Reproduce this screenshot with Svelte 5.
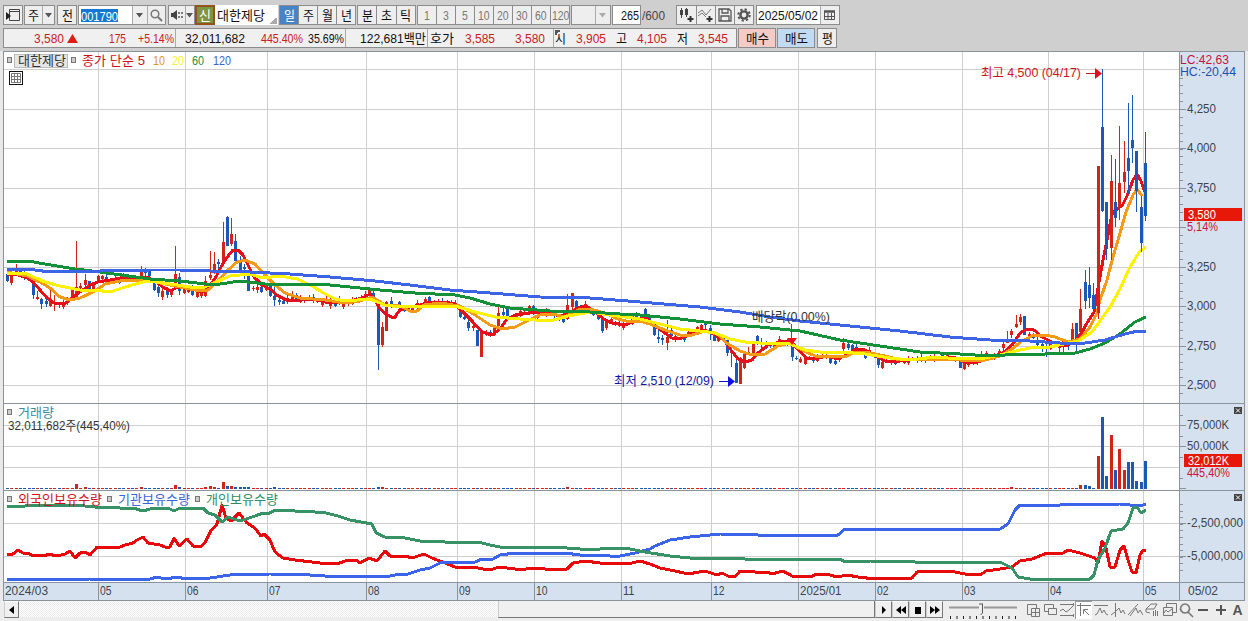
<script lang="ts">
	type Point = [number, number];
	// index, high, body top, body bottom, low, 1 = rising
	type Candle = [number, number, number, number, number, number];

	const STEP = 4.311;
	const RED = '#d42418';
	const BLUE = '#1c58b8';

	const months = [
		[98, '05'], [185, '06'], [267, '07'], [366, '08'], [457, '09'], [534, '10'], [621, '11'],
		[711, '12'], [798, '2025/01'], [875, '02'], [962, '03'], [1048, '04'], [1143, '05']
	] as [number, string][];

	const priceGrid = [
		[109, '4,250'], [148, '4,000'], [188, '3,750'], [227, ''], [267, '3,250'],
		[306, '3,000'], [346, '2,750'], [385, '2,500']
	] as [number, string][];

	const ma5: Point[] = [
		[7,274],[15,274],[27,278],[33,282],[40,290],[47,298],[54,303],[66,303],[72,298],[80,292],[90,285],[98,282],
		[110,280],[120,278],[135,277],[146,277],[155,281],[163,287],[170,291],[178,287],[187,287],[195,290],[203,292],
		[210,286],[217,275],[222,265],[228,256],[233,250],[238,250],[243,255],[248,265],[254,277],[262,285],[270,289],
		[278,296],[287,300],[300,300],[312,299],[325,302],[335,303],[350,301],[362,298],[370,294],[375,300],[380,309],
		[387,315],[394,318],[400,310],[410,307],[420,305],[430,302],[445,302],[455,304],[462,311],[472,321],[482,332],
		[492,335],[500,329],[507,319],[515,315],[530,313],[545,312],[560,316],[570,313],[577,308],[586,306],[595,312],
		[605,320],[612,323],[625,325],[635,321],[645,317],[653,324],[662,331],[672,338],[682,338],[695,332],[705,330],
		[715,335],[724,340],[731,350],[738,359],[745,362],[752,360],[758,353],[768,345],[780,342],[790,341],[797,348],
		[806,358],[815,359],[827,356],[838,359],[848,354],[856,349],[865,350],[875,356],[885,361],[900,361],[920,359],
		[935,358],[945,357],[955,358],[965,362],[975,363],[990,358],[1003,353],[1013,344],[1020,333],[1027,329],
		[1034,330],[1042,337],[1052,342],[1060,346],[1068,345],[1075,341],[1082,332],[1087,323],[1094,312],[1098,288],
		[1103,260],[1106,245],[1112,214],[1118,208],[1122,206],[1127,196],[1133,180],[1137,174],[1141,181],[1145,192]
	];
	const ma10: Point[] = [
		[7,272],[27,276],[40,282],[50,288],[60,297],[70,300],[80,298],[95,291],[105,284],[120,281],[145,280],[165,284],
		[180,287],[195,290],[208,290],[218,281],[228,270],[237,262],[245,260],[255,264],[265,275],[275,285],[285,293],
		[300,298],[325,300],[345,303],[360,301],[372,297],[385,305],[400,306],[410,311],[417,311],[424,305],[440,303],
		[460,306],[475,315],[490,325],[502,329],[515,327],[527,321],[540,315],[553,314],[565,317],[580,309],[590,309],
		[605,313],[618,319],[630,322],[640,321],[650,324],[665,330],[680,335],[692,335],[705,331],[717,334],[728,344],
		[740,351],[752,355],[765,354],[778,346],[790,343],[800,349],[815,356],[830,356],[845,357],[855,352],[870,353],
		[885,356],[900,360],[930,359],[960,360],[985,360],[1000,356],[1012,349],[1022,341],[1034,335],[1045,335],
		[1055,337],[1068,342],[1080,339],[1090,327],[1097,313],[1100,300],[1107,280],[1113,257],[1118,240],[1126,212],
		[1133,195],[1137,189],[1142,196]
	];
	const ma20: Point[] = [
		[7,273],[27,274],[45,282],[60,286],[80,290],[95,290],[110,292],[125,287],[147,281],[170,284],[190,287],[205,287],
		[218,281],[230,276],[250,274],[262,278],[280,276],[297,279],[312,286],[325,294],[335,299],[345,301],[370,299],
		[385,305],[400,307],[430,306],[455,306],[475,312],[495,317],[520,319],[550,321],[568,316],[590,312],[610,315],
		[640,319],[660,324],[680,329],[700,331],[715,333],[730,339],[745,342],[760,343],[790,344],[805,350],[820,352],
		[840,352],[865,354],[890,358],[910,360],[935,357],[960,359],[985,358],[1000,355],[1020,350],[1035,347],
		[1050,347],[1078,341],[1092,332],[1100,321],[1110,307],[1120,289],[1130,267],[1140,251],[1146,247]
	];
	const ma60: Point[] = [
		[7,261],[28,261],[45,264],[75,269],[100,272],[150,279],[180,281],[205,284],[220,284],[240,281],[265,284],
		[295,285],[320,284],[350,287],[380,290],[415,293],[455,295],[470,298],[490,304],[510,308],[550,311],[590,312],
		[620,314],[640,315],[680,319],[720,324],[760,327],[800,331],[840,340],[880,346],[920,352],[960,354],[990,356],
		[1020,354],[1045,354],[1075,353],[1090,349],[1105,343],[1120,334],[1135,322],[1146,317]
	];
	const ma120: Point[] = [
		[7,269],[35,270],[50,272],[100,271],[150,270],[180,270],[210,271],[250,272],[290,274],[330,277],[375,281],
		[410,285],[450,290],[490,293],[540,297],[590,298],[640,302],[700,307],[740,312],[770,317],[800,321],[850,326],
		[900,331],[950,337],[990,340],[1030,341],[1060,343],[1085,343],[1105,340],[1125,334],[1138,331],[1146,331]
	];

	const foreign: Point[] = [
		[7,555],[13,554],[18,550],[23,553],[28,553],[33,556],[40,555],[45,556],[48,554],[57,556],[65,554],[70,551],
		[75,558],[80,553],[85,552],[90,555],[97,547],[110,548],[120,547],[125,545],[133,543],[137,540],[143,537],
		[148,543],[160,545],[165,547],[170,547],[174,538],[179,546],[187,539],[193,546],[202,546],[206,541],[210,532],
		[217,524],[222,505],[226,518],[231,521],[239,513],[247,523],[255,528],[261,536],[264,534],[270,540],[275,552],
		[283,558],[295,560],[320,563],[337,564],[345,561],[356,560],[360,563],[369,558],[377,561],[385,551],[390,556],
		[405,556],[412,558],[424,554],[432,558],[445,563],[455,567],[465,568],[473,567],[483,569],[493,569],[499,567],
		[515,569],[520,570],[532,568],[545,569],[567,569],[573,563],[585,561],[600,563],[632,563],[640,561],[650,564],
		[660,568],[675,571],[688,574],[705,571],[717,575],[722,573],[728,576],[736,576],[740,571],[755,572],[767,572],
		[772,574],[783,571],[792,576],[810,577],[817,574],[830,575],[837,577],[847,575],[858,577],[875,579],[890,578],
		[903,579],[912,578],[917,572],[930,571],[940,571],[955,572],[965,574],[980,575],[986,571],[1000,569],[1012,567],
		[1020,561],[1032,559],[1047,553],[1063,553],[1068,550],[1080,553],[1095,558],[1098,563],[1102,541],[1106,548],
		[1110,567],[1115,567],[1120,550],[1124,546],[1128,560],[1132,572],[1136,573],[1140,555],[1143,550],[1146,550]
	];
	const institution: Point[] = [
		[7,579],[33,579],[35,580],[90,579],[110,580],[125,579],[150,579],[157,577],[165,579],[178,577],[185,579],
		[210,578],[230,575],[270,574],[310,575],[325,576],[390,576],[400,574],[408,574],[420,570],[430,568],[440,563],
		[450,562],[475,562],[482,559],[493,559],[500,555],[515,553],[565,553],[580,555],[610,556],[620,556],[635,553],
		[650,549],[655,546],[670,540],[690,537],[720,534],[758,535],[838,535],[845,529],[930,529],[1000,529],[1008,524],
		[1015,510],[1020,505],[1060,505],[1120,504],[1140,506],[1146,504]
	];
	const individual: Point[] = [
		[7,506],[20,507],[30,505],[75,505],[95,507],[120,508],[133,508],[143,511],[150,509],[165,508],[170,509],[174,511],
		[180,508],[203,508],[208,513],[215,515],[222,522],[228,517],[240,521],[255,516],[263,513],[268,514],[275,510],
		[295,511],[315,512],[322,512],[330,514],[338,516],[350,520],[372,524],[376,533],[385,537],[405,538],[420,541],
		[445,542],[478,542],[490,545],[500,547],[520,548],[545,547],[567,548],[580,549],[600,549],[620,548],[630,549],
		[645,552],[670,556],[700,559],[725,558],[745,559],[785,559],[840,559],[845,562],[870,561],[915,562],[935,563],
		[950,562],[1000,562],[1012,568],[1018,577],[1030,579],[1090,579],[1094,575],[1098,560],[1105,548],[1111,531],
		[1123,529],[1128,523],[1133,508],[1137,507],[1141,513],[1146,510]
	];

	const known: Candle[] = [
		[0,273,274,281,282,0],[1,274,275,283,285,1],[2,264,269,274,275,1],[3,269,271,272,276,0],[4,270,273,276,280,0],
		[5,275,277,279,280,0],[6,280,280,295,299,0],[7,291,297,299,300,1],[8,298,299,304,309,0],[9,299,301,304,307,0],
		[10,289,299,306,307,1],[11,295,302,303,311,1],[12,302,303,305,308,0],[13,300,302,307,309,1],[14,297,299,303,305,1],
		[15,289,290,300,300,1],[16,241,287,297,298,1],[17,283,286,288,289,1],[18,274,280,285,286,1],[19,281,281,290,293,0],
		[20,284,285,290,291,1],[21,275,276,281,283,1],[22,275,276,279,281,1],[23,274,277,281,283,0],[24,278,279,282,282,1],
		[25,276,278,281,283,1],[26,278,279,283,284,0],[27,273,274,280,282,0],[28,276,277,280,281,1],[29,276,277,280,281,0],
		[30,276,277,281,282,1],[31,266,271,282,283,1],[32,268,270,273,276,0],[33,269,271,276,281,0],[34,280,281,290,291,0],
		[35,286,287,293,297,0],[36,288,291,297,300,1],[37,287,288,295,298,0],[38,289,290,295,297,1],[39,246,274,287,288,1],
		[40,273,277,291,295,0],[41,286,287,293,294,1],[42,285,286,292,293,1],[43,285,286,295,296,0],[44,290,292,297,298,1],
		[45,290,291,296,298,1],[46,276,281,296,297,1],[47,251,275,278,280,1],[48,252,264,273,274,1],[49,259,262,264,272,0],
		[50,222,242,263,266,1],[51,216,217,246,246,0],[52,218,234,244,246,1],[53,234,241,261,261,0],[54,256,260,270,272,0],
		[55,264,267,269,279,0],[56,270,275,291,291,0],[57,286,288,289,291,1],[58,285,287,290,293,1],[59,286,287,292,293,0],
		[60,284,285,290,291,1],[61,282,283,296,297,0],[62,287,296,300,306,0],[63,297,300,302,305,0],[64,300,301,304,304,0],
		[66,291,294,301,302,1],[67,293,295,300,301,0],[75,298,300,306,309,1],[78,300,302,307,309,1],
		[83,291,294,299,300,1],[84,288,289,293,297,1],[85,291,293,297,302,0],[86,301,302,345,370,0],[87,322,327,345,347,1],
		[88,301,302,331,331,1],[89,297,301,307,308,0],[91,301,302,308,310,0],[92,306,307,311,312,0],[97,297,299,304,306,1],
		[98,296,297,303,304,0],[105,306,307,317,318,0],[106,316,317,319,320,0],[107,320,322,328,331,0],[108,323,326,328,331,1],
		[109,330,330,346,346,0],[110,333,333,357,357,1],[111,330,332,335,336,1],[112,330,332,336,337,0],[113,326,327,335,336,1],
		[114,306,313,326,327,1],[115,308,312,315,318,0],[116,308,309,316,317,0],[121,305,306,313,315,1],[122,305,306,313,315,0],
		[123,313,315,318,321,1],[128,315,316,320,321,0],[129,316,318,322,323,0],[130,294,305,319,320,1],[131,293,293,307,309,1],
		[132,300,301,308,309,0],[133,305,306,310,312,0],[136,310,311,315,316,0],[137,314,315,319,320,0],[138,317,318,331,333,0],
		[139,319,320,328,330,1],[145,315,316,324,325,1],[146,312,314,318,319,0],[148,308,309,314,316,0],[149,315,316,323,324,0],
		[150,323,324,335,336,0],[151,330,337,339,343,0],[152,335,338,340,345,0],[153,320,337,343,350,1],[154,328,330,336,337,0],
		[160,326,327,333,334,1],[161,324,325,332,333,1],[162,322,323,325,330,0],[163,325,328,334,340,0],[164,332,333,341,341,0],
		[165,333,334,341,342,1],[166,335,337,341,342,0],[167,338,340,353,356,0],[168,345,351,353,367,1],[169,360,363,383,383,0],
		[170,357,358,384,384,1],[171,353,354,368,369,1],[172,347,352,354,355,1],[173,343,344,353,354,1],[174,335,336,344,345,0],
		[175,338,342,344,350,0],[182,345,346,357,361,0],[183,356,358,359,360,0],[184,357,359,362,363,1],[185,355,357,364,365,1],
		[191,357,358,363,364,0],[192,360,361,364,365,0],[194,338,343,349,352,1],[195,341,344,348,350,0],[196,344,345,350,352,0],
		[199,352,353,358,359,0],[202,358,359,365,368,0],[203,360,362,368,369,1],[221,359,361,368,368,0],[222,361,362,369,370,1],
		[226,351,355,357,359,1],[227,351,353,359,360,1],[230,349,351,355,356,1],[231,341,344,348,351,1],[232,331,341,343,343,1],
		[233,329,331,335,338,1],[234,315,324,327,328,1],[235,314,317,322,325,1],[236,316,316,335,335,0],[237,332,334,337,339,1],
		[238,333,334,338,339,0],[239,336,342,345,347,0],[240,343,344,348,352,0],[241,344,346,348,357,0],[242,342,343,349,350,1],
		[243,341,342,346,347,0],[244,343,345,348,352,1],[245,339,341,347,352,1],[246,342,343,346,350,0],[247,323,329,342,343,1],
		[248,323,323,341,351,0],[249,289,309,332,333,1],[250,270,282,301,309,0],[251,267,285,298,308,0],[252,283,295,309,310,0],
		[253,166,166,313,319,1],[254,69,127,211,212,0],[255,202,202,249,260,0],[256,155,181,248,260,1],[257,159,202,218,227,0],
		[258,126,183,208,220,1],[259,141,172,182,193,1],[260,103,158,171,194,0],[261,95,140,148,163,0],[262,151,151,191,212,0],
		[263,196,207,243,252,0],[264,132,163,216,221,0]
	];

	const volumes: Record<number, number> = {
		16: 5, 18: 2, 31: 2, 39: 4, 40: 2, 46: 2, 47: 3, 48: 2, 50: 7, 51: 3, 52: 3, 53: 2, 54: 2, 55: 2, 56: 2,
		62: 2, 86: 2, 87: 2, 130: 2, 233: 2, 249: 4, 250: 4, 251: 3, 252: 1, 253: 33, 254: 72, 255: 13, 256: 54,
		257: 19, 258: 40, 259: 19, 260: 27, 261: 27, 262: 8, 263: 7, 264: 28
	};

	function valueAt(points: Point[], x: number) {
		const i = Math.max(1, points.findIndex((p) => p[0] >= x));
		const [x0, y0] = points[i - 1];
		const [x1, y1] = points[i];
		return y0 + ((y1 - y0) * (x - x0)) / (x1 - x0);
	}

	const xOf = (i: number) => Math.round(7 + STEP * i);

	const candles: Candle[] = Array.from({ length: 265 }, (_, i) => {
		const hit = known.find((c) => c[0] === i);
		if (hit) return hit;
		// quiet sessions hug the short average
		const wobble = ((i * 37) % 7) - 3;
		const mid = Math.round(valueAt(ma5, xOf(i)) + wobble * 0.4);
		const half = 1 + ((i * 13) % 3) * 0.5;
		return [i, mid - half - 1 - (i % 3), mid - half, mid + half, mid + half + 1 + (i % 2), (i * 29) % 5 < 3 ? 1 : 0];
	});

	const toPoints = (p: Point[]) => p.map((q) => q.join(',')).join(' ');

	const priceTicks = Array.from({ length: 41 }, (_, i) => 77.5 + i * 7.89);
	const volTicks = [415, 436, 457, 478, 488];
	const holdTicks = Array.from({ length: 11 }, (_, i) => 504 + i * 6.6);

	const periods = ['일', '주', '월', '년'];
	const intraday = ['분', '초', '틱'];
	const minutes = ['1', '3', '5', '10', '20', '30', '60', '120'];

	// text, width, gap before, tone
	const quotes = [
		['32,011,682', 60, 9, ''], ['445.40%', 42, 16, 'up'], ['35.69%', 36, 5, ''], ['|', 0, 1, ''],
		['122,681백만', 66, 14, ''], ['|', 0, 1, ''], ['호가', 24, 2, ''], ['3,585', 30, 11, 'up'],
		['3,580', 30, 20, 'up'], ['|', 0, 8, ''], ['시', 11, 1, 'corner'], ['3,905', 30, 10, 'up'],
		['고', 11, 10, ''], ['4,105', 30, 10, 'up'], ['저', 11, 10, ''], ['3,545', 30, 10, 'up']
	] as [string, number, number, string][];

	const tools = [
		'M6 12.500H2.500v-10h9V6M6.500 6.500h8v8h-8zM10.500 6.500v8M6.500 10.500h8',
		'M6 9.500H2.500v-7h9V6M6.500 6.500h8v6h-8z',
		'M1 2.500h13M1 13.500h13M14.500 1v3M14.500 12v3M1 9l3-2 3 3 3-2 4-4',
		'M1 3.500h14M4.500 1v13M13 13L8 8M7.500 12V7.500H12',
		'M1 3.500h14M2 13l2-1 3-6 2 5 2-3 2 4 2 1',
		'M5.500 1v14M1 13l4-3 4-4 2 5 2-3 2 4',
		'M1 13L11 2M3 14l6-8 2 5 2-3 3 5',
		'M2 7l5-5h6l-3 5zM2 7v3l4 1M9.500 9v5M11.500 8v6M13.500 9v5',
		'M5.500 5V1.500h10v9H12M2.500 5.500h9v8h-9zM3 11l2-3 2 2 4-3',
		'M7 2a4.5 4.5 0 1 0 .1 0M10 10l5 5'
	];
</script>

{#snippet label(text: string, w: number, tone = '')}
	<svg class="label {tone}" width={w} height="16">
		<text x="0" y="12.5" textLength={w} lengthAdjust="spacingAndGlyphs">{text}</text>
	</svg>
{/snippet}

{#snippet caret()}
	<svg width="8" height="5"><path d="M0 0h7L3.5 4.500z" fill="#555" /></svg>
{/snippet}

{#snippet line(points: Point[], color: string)}
	<polyline points={toPoints(points)} stroke={color} />
{/snippet}

{#snippet words(x: number, y: number, text: string, w: number, color: string)}
	<text {x} {y} fill={color} textLength={w} lengthAdjust="spacingAndGlyphs">{text}</text>
{/snippet}

<div class="app">
	<header class="toolbar">
		<button class="box w20">
			<svg width="16" height="16" fill="none" stroke="#444">
				<path d="M4.500 2.500h10v11h-10zM4 4.500h11" /><path d="M1 5l5 4-5 4z" fill="#222" stroke="none" />
			</svg>
		</button>
		<div class="box split l1">
			<span class="w17">{@render label('주', 11)}</span><i></i><span class="grow">{@render caret()}</span>
		</div>
		<button class="box w20 l2">{@render label('전', 11)}</button>
		<div class="box code l1">
			<span class="entry"><mark>{@render label('001790', 37)}</mark></span><i></i>
			<span class="w14">{@render caret()}</span><i></i>
			<span class="grow">
				<svg width="13" height="13" fill="none" stroke="#777" stroke-width="1.5"><circle cx="5" cy="5" r="3.800" /><path d="M8 8l4 4" stroke-width="2" /></svg>
			</span>
		</div>
		<div class="box sound l2">
			<span class="w17">
				<svg width="14" height="12"><path d="M1 4h2l4-3v10L3 8H1z" fill="#444" /><path d="M9 3v2M9 7v2M12 3v2M12 7v2" stroke="#555" stroke-width="1.5" /></svg>
			</span><i></i><span class="grow">{@render caret()}</span>
		</div>
		<div class="credit">{@render label('신', 12)}</div>
		<div class="name">{@render label('대한제당', 48)}</div>
		<div class="group l1">
			{#each periods as p, i}
				<button class:on={i === 0}>{@render label(p, 11)}</button>
			{/each}
		</div>
		<div class="group l1">
			{#each intraday as p}
				<button>{@render label(p, 11)}</button>
			{/each}
		</div>
		<div class="group dim l1">
			{#each minutes as m}
				<button>{@render label(m, m.length * 5.8)}</button>
			{/each}
		</div>
		<div class="box combo"><span></span><i></i><span class="w14">{@render caret()}</span></div>
		<div class="count l1">{@render label('265', 18)}</div>
		<div class="total">{@render label('/600', 23)}</div>
		<div class="group icons">
			<button>
				<svg width="17" height="17"><path d="M3.500 1v10M8.500 1v9" stroke="#444" /><path d="M2 3h3v5H2zM7 2h3v6H7z" fill="#444" /><path d="M12.500 9v6M9.500 12h6" stroke="#333" stroke-width="2" /></svg>
			</button>
			<button>
				<svg width="17" height="17" fill="none" stroke="#777"><path d="M1 6l4-3 4 5 5-6M1 9l4-3 4 4" /><path d="M12.500 9v6M9.500 12h6" stroke="#333" stroke-width="2" /></svg>
			</button>
			<button>
				<svg width="16" height="16" fill="none" stroke="#555" stroke-width="1.300"><path d="M2 2h10l2 2v10H2zM5 2v4h6V2M4 14V9h8v5" /></svg>
			</button>
			<button>
				<svg width="16" height="16" fill="none" stroke="#555"><circle cx="8" cy="8" r="3.600" stroke-width="2.400" /><circle cx="8" cy="8" r="5.700" stroke-width="2" stroke-dasharray="2.200 2.276" /></svg>
			</button>
		</div>
		<div class="box date l2">
			<span class="day">{@render label('2025/05/02', 60)}</span><i></i>
			<span class="grow">
				<svg width="12" height="11" fill="none" stroke="#555"><path d="M0.500 1.500h10v8h-10zM0.500 6.500h10M4 3v6M7.500 3v6" /><path d="M0 1.500h11" stroke-width="2.500" /></svg>
			</span>
		</div>
	</header>

	<div class="quote-row">
		<div class="quote">
			<div class="last">
				{@render label('3,580', 30, 'up')}
				<svg class="rise" width="11" height="9"><path d="M5.500 0L11 9H0z" fill="#dc1e14" /></svg>
				<span class="diff">{@render label('175', 17, 'up')}</span>
				{@render label('+5.14%', 36, 'up')}
			</div>
			{#each quotes as [text, w, gap, tone]}
				{#if text === '|'}
					<i style:margin-left="{gap}px"></i>
				{:else}
					<span style:margin-left="{gap}px" class:corner={tone === 'corner'}>{@render label(text, w, tone)}</span>
				{/if}
			{/each}
		</div>
		<button class="box buy">{@render label('매수', 23)}</button>
		<button class="box sell">{@render label('매도', 23)}</button>
		<button class="box w20">{@render label('평', 11)}</button>
	</div>

	<svg class="chart" width="1248" height="550" viewBox="0 51 1248 550">
		<rect x="3" y="51" width="1242" height="550" fill="#fff" />
		<rect x="1179" y="52" width="65" height="549" fill="#d6e1ef" />
		<rect x="4" y="583" width="1240" height="18" fill="#d6e1ef" />

		<g class="grid">
			{#each months as [x]}
				<path d="M{x + 0.5} 52V582" />
			{/each}
			{#each [69, ...priceGrid.map((p) => p[0]), 425, 446, 467, 523, 556] as y}
				<path d="M4 {y + 0.5}H1179" />
			{/each}
		</g>

		<g class="frame">
			<path d="M3 51.500H1245M3.500 51V601M1244.500 51V601M1179.500 51V601M3 403.500H1245M3 490.500H1245M3 582.500H1245M3 600.500H1245" />
			{#each months as [x]}
				<path d="M{x + 0.5} 583V601" />
			{/each}
			{#each priceTicks as y}
				<path d="M1180 {Math.round(y) + 0.5}h3" />
			{/each}
			{#each [...volTicks, ...holdTicks] as y}
				<path d="M1180 {Math.round(y) + 0.5}h3" />
			{/each}
			{#each [...priceGrid.map((p) => p[0]), 425, 446, 488, 523, 556] as y}
				<path d="M1180 {y + 0.5}h6" />
			{/each}
		</g>

		<g class="bars">
			{#each candles as [i, high, top, bottom, low, up]}
				<rect x={xOf(i)} y={high} width="1" height={low - high} fill={up ? RED : BLUE} />
				<rect x={xOf(i) - 1} y={top} width="3" height={bottom - top} fill={up ? RED : BLUE} />
			{/each}
		</g>

		<g class="lines">
			{@render line(ma5, '#e4101c')}
			{@render line(ma10, '#f49a14')}
			{@render line(ma20, '#fff200')}
			{@render line(ma60, '#149038')}
			{@render line(ma120, '#3c64e4')}
		</g>
		<g class="bars">
			{#each candles.slice(252) as [i, high, top, bottom, low, up]}
				<rect x={xOf(i)} y={high} width="1" height={low - high} fill={up ? RED : BLUE} />
				<rect x={xOf(i) - 1} y={top} width="3" height={bottom - top} fill={up ? RED : BLUE} />
			{/each}
			{#each candles as [i, , , , , up]}
				<rect x={xOf(i) - 1} y={489 - (volumes[i] ?? 1)} width="3" height={volumes[i] ?? 1} fill={up ? RED : BLUE} />
			{/each}
		</g>
		<path d="M787 338h10l-5 7z" fill="#e4101c" />
		<path d="M791.500 324v15" stroke="#d42418" />

		{@render words(981, 77, '최고 4,500 (04/17)', 100, '#d01020')}
		<path d="M1086 73.500h10" stroke="#d01020" />
		<path d="M1095 68l7 5.500-7 5.500z" fill="#e01020" />
		{@render words(614, 385, '최저 2,510 (12/09)', 100, '#1414a0')}
		<path d="M719 381.500h10" stroke="#1414c0" />
		<path d="M728 376l7 5.500-7 5.500z" fill="#1010e0" />
		{@render words(752, 321, '배당락(0,00%)', 78, '#333')}

		<g class="pins">
			{#each [[7, 57], [71, 57], [7, 409], [7, 496], [107, 496], [195, 496]] as [x, y]}
				<rect x={x + 0.5} y={y + 0.5} width="4" height="5" />
			{/each}
		</g>
		<rect x="14.500" y="54.500" width="53" height="13" fill="#e6e6e6" stroke="#bbb" />
		{@render words(18, 65, '대한제당', 48, '#333')}
		{@render words(82, 65, '종가 단순 5', 63, '#d01020')}
		{@render words(153, 65, '10', 12, '#e0961e')}
		{@render words(172, 65, '20', 12, '#f6f03c')}
		{@render words(192, 65, '60', 12, '#1c8c46')}
		{@render words(213, 65, '120', 18, '#3c64c8')}
		<rect x="9.500" y="71.500" width="13" height="13" fill="#fff" stroke="#111" />
		<path d="M11.500 73.500h9v9h-9zM11 76.500h10M11 79.500h10M14.500 73v10M17.500 73v10" fill="none" stroke="#777" />

		{@render words(18, 417, '거래량', 36, '#3a8c9c')}
		{@render words(8, 430, '32,011,682주(445,40%)', 122, '#333')}

		<g class="lines">
			{@render line(foreign, '#e60a0a')}
			{@render line(institution, '#3c64e8')}
			{@render line(individual, '#379266')}
		</g>
		{@render words(18, 504, '외국인보유수량', 84, '#d01020')}
		{@render words(118, 504, '기관보유수량', 72, '#3c64d8')}
		{@render words(206, 504, '개인보유수량', 72, '#2f8c62')}

		<g class="scale">
			{@render words(1180, 63.5, 'LC:42,63', 49, '#c8143c')}
			{@render words(1180, 76, 'HC:-20,44', 56, '#1c50b4')}
			{#each priceGrid as [y, text]}
				{#if text}{@render words(1187, y + 4, text, 29, '#3c4450')}{/if}
			{/each}
			<rect x="1184" y="208" width="58" height="13" fill="#e81808" />
			{@render words(1188, 218.5, '3,580', 28, '#fff')}
			{@render words(1187, 231, '5,14%', 31, '#c8143c')}
			{@render words(1187, 429, '75,000K', 42, '#3c4450')}
			{@render words(1187, 449.5, '50,000K', 42, '#3c4450')}
			<rect x="1184" y="454" width="58" height="13" fill="#e81808" />
			{@render words(1188, 464.5, '32,012K', 41, '#fff')}
			{@render words(1187, 477, '445,40%', 43, '#c8143c')}
			{@render words(1187, 527, '-2,500,000', 56, '#3c4450')}
			{@render words(1187, 560, '-5,000,000', 56, '#3c4450')}
		</g>
		{#each [407, 494] as y}
			<rect x="1234" {y} width="8" height="7" fill="#444" />
			<path d="M1236 {y + 1.5}l4 4m0-4l-4 4" stroke="#fff" />
		{/each}

		{@render words(5, 595, '2024/03', 43, '#3c4450')}
		{#each months as [x, text]}
			{@render words(x + 2, 595, text, text.length * 6 - 0.5, '#3c4450')}
		{/each}
		{@render words(1188, 595, '05/02', 30, '#3c4450')}
	</svg>

	<footer>
		<button class="key"><svg width="6" height="8"><path d="M5 0v8L0 4z" /></svg></button>
		<div class="track"></div>
		<div class="thumb"></div>
		<button class="key"><svg width="6" height="8"><path d="M1 0v8l4-4z" /></svg></button>
		<button class="key"><svg width="10" height="8"><path d="M5 0v8L0 4zM10 0v8L5 4z" /></svg></button>
		<button class="key"><svg width="8" height="8"><path d="M1 1h6v7H1z" /></svg></button>
		<button class="key"><svg width="10" height="8"><path d="M0 0v8l5-4zM5 0v8l5-4z" /></svg></button>
		<svg class="slider" width="70" height="18" stroke="#555">
			<path d="M0 5.500h68" stroke="#999" stroke-width="2" />
			<path d="M1 15.500h70" stroke="#222" stroke-width="3" stroke-dasharray="1 5.500" />
			<path d="M30 2h5v8l-2 2h-3z" fill="#eee" stroke="none" /><path d="M30 2h4M33.500 2v9l-2 2" fill="none" />
		</svg>
		{#each tools as d, i}
			<button class="tool" class:pressed={i === 3}>
				<svg width="16" height="16" fill="none" stroke="#777"><path {d} stroke-width={i === 9 ? 1.6 : 1} /></svg>
			</button>
		{/each}
		<button class="tool"><svg width="16" height="16" stroke="#555" stroke-width="2"><path d="M3 8h10" /></svg></button>
		<button class="tool"><svg width="16" height="16" stroke="#555" stroke-width="2"><path d="M3 8h10M8 3v10" /></svg></button>
		<button class="tool big">A</button>
	</footer>
</div>

<style>
	:global(body) {
		background: #cfcfcf;
		overflow: hidden;
	}

	.app {
		width: 1248px;
		height: 621px;
		font-family: 'Liberation Sans', 'Noto Sans CJK KR', sans-serif;
		font-size: 13px;
		display: flex;
		flex-direction: column;
		background: #cfcfcf;
	}

	button {
		padding: 0;
		border: 0;
		background: none;
		font: inherit;
	}

	svg {
		flex: none;
		display: block;
	}

	.label {
		overflow: visible;
		fill: #111;
	}

	.label.up {
		fill: #c8201e;
	}

	.toolbar {
		display: flex;
		height: 20px;
		padding: 5px 0 0 3px;
	}

	.box {
		display: flex;
		align-items: center;
		justify-content: center;
		box-sizing: border-box;
		height: 20px;
		flex: none;
		border: 1px solid #8c8c8c;
		background: #eee;
	}

	.box > span {
		display: flex;
		align-items: center;
		justify-content: center;
		height: 18px;
	}

	.box > i, .quote > i {
		width: 1px;
		align-self: stretch;
		background: #aaa;
	}

	.l1 { margin-left: 1px; }
	.l2 { margin-left: 2px; }
	.w20 { width: 20px; }
	.w17 { width: 17px; }
	.w14 { width: 14px; }
	.grow { flex: 1; }
	.split { width: 31px; }
	.sound { width: 27px; }

	.code {
		width: 88px;

		.entry {
			width: 53px;
			justify-content: flex-start;
			background: #fff;
		}

		mark {
			height: 13px;
			margin-left: 2px;
			background: #1478d0;
		}

		mark .label {
			fill: #fff;
			margin-top: -1px;
		}
	}

	.credit {
		display: flex;
		align-items: center;
		justify-content: center;
		box-sizing: border-box;
		width: 20px;
		height: 20px;
		border: 2px solid #94521c;
		background: #7e9440;

		.label { fill: #fff; }
	}

	.name {
		box-sizing: border-box;
		width: 63px;
		height: 20px;
		padding-left: 2px;
		display: flex;
		align-items: center;
		background: linear-gradient(135deg, transparent 50%, #aaa 50%) right 1px bottom 1px / 7px 7px no-repeat #fff;
	}

	.group {
		display: flex;
		box-sizing: border-box;
		height: 20px;
		border: 1px solid #8c8c8c;
		border-right: 0;
		background: #eee;

		button {
			display: flex;
			align-items: center;
			justify-content: center;
			box-sizing: border-box;
			width: 19.1px;
			border-right: 1px solid #8c8c8c;
		}

		.on { background: #4a82c8; }
		.on .label { fill: #fff; }
	}

	.dim .label { fill: #777; }

	.combo {
		width: 40px;
		margin-left: 1px;

		span:first-child { width: 23px; }
		path { fill: #aaa; }
	}

	.count {
		display: flex;
		align-items: center;
		justify-content: flex-end;
		box-sizing: border-box;
		width: 29px;
		height: 20px;
		padding-right: 1px;
		border: 1px solid #8c8c8c;
		background: #fff;
	}

	.total {
		display: flex;
		box-sizing: border-box;
		align-items: center;
		width: 35px;
		padding-left: 1px;

		.label { fill: #444; }
	}

	.date {
		width: 84px;

		.day {
			width: 63px;
			background: #fff;
		}
	}

	.quote-row {
		display: flex;
		padding: 3px 0 0 3px;
		height: 23px;
	}

	.quote {
		display: flex;
		align-items: center;
		box-sizing: border-box;
		width: 734px;
		height: 20px;
		border: 1px solid #8c8c8c;
		background: #f0f0f0;

		.last {
			display: flex;
			align-items: center;
			box-sizing: border-box;
			width: 172px;
			padding-left: 30px;
			border-right: 1px solid #aaa;
			height: 18px;
		}

		.rise { margin-left: 3px; }
		.diff { margin: 0 12px 0 31px; }

		.corner {
			background: linear-gradient(135deg, #555 50%, transparent 50%) left top / 6px 6px no-repeat;
		}
	}

	.buy {
		width: 38px;
		margin-left: 1px;
		background: #f5cbc8;
	}

	.sell {
		width: 38px;
		margin: 0 2px 0 1px;
		background: #c2dbf4;
	}

	.chart {
		background: #e9e9e9;

		text { font-size: 13px; }
		.scale text { font-size: 12.5px; }
		.grid path { stroke: #cfcfcf; }
		.frame path { stroke: #8a929c; }
		.pins rect { fill: #ccc; stroke: #777; }
	}

	.bars, .lines, .grid, .frame {
		shape-rendering: crispEdges;
	}

	.lines polyline {
		fill: none;
		stroke-width: 3;
		stroke-linejoin: round;
	}

	footer {
		display: flex;
		height: 20px;
		padding-left: 4px;
		background: #ededed;
	}

	.key {
		display: flex;
		align-items: center;
		justify-content: center;
		box-sizing: border-box;
		width: 17px;
		height: 17px;
		border: 1px solid #777;
		border-top-color: #fff;
		border-left-color: #ccc;
		background: #f0f0f0;
	}

	.key:first-child { width: 15px; }

	.track {
		width: 479px;
		height: 16px;
		background: repeating-conic-gradient(#fff 0 25%, #ececec 0 50%) 0 0 / 2px 2px;
	}

	.thumb {
		box-sizing: border-box;
		width: 377px;
		height: 17px;
		border: solid #777;
		border-width: 0 1px 1px;
		border-left-color: #ccc;
		background: #f0f0f0;
	}

	.slider { margin: 1px 5px 0 6px; }

	.tool {
		display: flex;
		align-items: center;
		justify-content: center;
		width: 17.1px;
		height: 18px;
		flex: none;
	}

	.pressed {
		background: #fff;
		box-shadow: inset 1px 1px #999;
	}

	.big {
		color: #555;
		font: bold 14px 'Liberation Sans', sans-serif;
	}
</style>
